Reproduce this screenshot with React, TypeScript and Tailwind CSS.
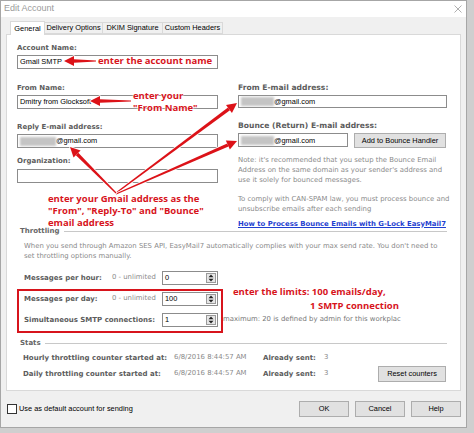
import React from 'react';

// Edit Account dialog (EasyMail7) with red tutorial annotations on top

const lbl = "h-[12px] shrink-0 font-['DejaVu_Sans',sans-serif] text-[7px] font-bold leading-[12px] text-[#5c5c5c] whitespace-nowrap";
const lblWide = "h-[12px] shrink-0 font-['DejaVu_Sans',sans-serif] text-[7.6px] font-bold leading-[12px] text-[#5c5c5c] whitespace-nowrap";
const ctl = "font-['Liberation_Sans',Arial,sans-serif] text-[7.4px] text-black whitespace-nowrap";
const note = "shrink-0 font-['DejaVu_Sans',sans-serif] text-[6.9px] leading-[9.7px] text-[#8a8a8a] whitespace-nowrap";
const redText = "absolute font-['Open_Sans',sans-serif] text-[9.5px] font-bold leading-[12px] text-[#d7141c] whitespace-nowrap [text-shadow:0_0_1px_#fff,0_0_2px_#fff,0_0_2px_#fff]";

const Blur = ({ w }: { w: number }) => (
  <div className="h-[9px] shrink-0 bg-[#c4c4c4] blur-[1px]" style={{ width: w }} />
);

const TextBox = ({ children, className = '' }: { children?: React.ReactNode; className?: string }) => (
  <div className={`flex h-[14px] items-center border border-[#8c8c8c] bg-white px-[2px] ${ctl} ${className}`}>
    {children}
  </div>
);

const Button = ({ label, className = '' }: { label: string; className?: string }) => (
  <div className={`flex shrink-0 items-center justify-center border border-[#adadad] bg-[#e1e1e1] ${ctl} ${className}`}>
    {label}
  </div>
);

const SpinBox = ({ value }: { value: string }) => (
  <div className={`flex h-[14px] w-[56px] shrink-0 items-center border border-[#8c8c8c] bg-white pl-[2px] ${ctl}`}>
    <span className="flex-1">{value}</span>
    <div className="mr-[1px] flex h-[10px] w-[10px] flex-col items-center justify-center border border-[#9a9a9a] bg-[#e6e6e6]">
      <svg width="6" height="8" viewBox="0 0 6 8">
        <path d="M3 0.5 L5.5 3.3 H0.5 Z" fill="#222" />
        <path d="M3 7.5 L5.5 4.7 H0.5 Z" fill="#222" />
      </svg>
    </div>
  </div>
);

const Legend = ({ title }: { title: string }) => (
  <div className="flex h-[10px] items-center pl-[3px]">
    <span className={`${lbl} h-[10px] leading-[10px] text-[#666]`}>{title}</span>
    <div className="ml-[4px] h-px flex-1 bg-[#c8c8c8]" />
  </div>
);

const ThrottleRow = ({
  label,
  value,
  limit = true,
  extra,
}: {
  label: string;
  value: string;
  limit?: boolean;
  extra?: string;
}) => (
  <div className="flex h-[14px] items-center pl-[7px]">
    <span className={`${lbl} w-[88px]`}>{label}</span>
    <span className={`${note} w-[50px] text-[#7a7a7a]`}>{limit ? '0 - unlimited' : ''}</span>
    <SpinBox value={value} />
    {extra && <span className={`${note} ml-[5px] text-[#777]`}>{extra}</span>}
  </div>
);

type Pt = { x1: number; y1: number; x2: number; y2: number };

const Arrow = ({ x1, y1, x2, y2 }: Pt) => {
  const dx = x2 - x1;
  const dy = y2 - y1;
  const len = Math.hypot(dx, dy);
  const ux = dx / len;
  const uy = dy / len;
  const nx = -uy;
  const ny = ux;
  const hl = 10;
  const hw = 5;
  const bx = x2 - ux * hl;
  const by = y2 - uy * hl;
  const t0 = 0.6;
  const t1 = 1.7;
  const shaft = `${x1 + nx * t0},${y1 + ny * t0} ${bx + nx * t1},${by + ny * t1} ${bx - nx * t1},${by - ny * t1} ${x1 - nx * t0},${y1 - ny * t0}`;
  const head = `${x2},${y2} ${bx + nx * hw},${by + ny * hw} ${bx - nx * hw},${by - ny * hw}`;
  return (
    <g>
      <polygon points={shaft} fill="#fff" stroke="#fff" strokeWidth="1.6" strokeLinejoin="round" />
      <polygon points={head} fill="#fff" stroke="#fff" strokeWidth="1.6" strokeLinejoin="round" />
      <polygon points={shaft} fill="#dc1218" />
      <polygon points={head} fill="#dc1218" />
    </g>
  );
};

const arrows: Pt[] = [
  { x1: 96, y1: 61, x2: 64, y2: 61 },
  { x1: 131, y1: 101, x2: 90, y2: 101 },
  { x1: 116, y1: 193, x2: 237, y2: 103 },
  { x1: 116, y1: 194, x2: 237, y2: 141 },
  { x1: 116, y1: 193, x2: 70, y2: 147 },
];

export default function App() {
  return (
    <div className="relative h-[433px] w-[474px] overflow-hidden bg-[#cfcfcf]">
      <div className="flex h-[428px] w-[467px] flex-col border border-[#a6a6a6] bg-[#f0f0f0]">
        {/* title bar */}
        <div className="flex h-[16px] shrink-0 items-center justify-between bg-white pl-[3px] pr-[4px]">
          <span className="font-['Liberation_Sans',Arial,sans-serif] text-[9px] text-[#9a9a9a]">Edit Account</span>
          <svg width="8" height="8" viewBox="0 0 8 8">
            <path d="M0.5 0.5 L7.5 7.5 M7.5 0.5 L0.5 7.5" stroke="#9a9a9a" strokeWidth="0.8" />
          </svg>
        </div>

        {/* tabs */}
        <div className="flex h-[17px] shrink-0 items-end pl-[9px]">
          <div className={`relative z-10 -mb-px flex h-[14px] w-[35px] items-center justify-center border border-b-0 border-[#d9d9d9] bg-white ${ctl}`}>
            General
          </div>
          <div className={`flex h-[12px] w-[58px] items-center justify-center border border-l-0 border-[#d9d9d9] bg-[#f0f0f0] ${ctl}`}>
            Delivery Options
          </div>
          <div className={`flex h-[12px] w-[60px] items-center justify-center border border-l-0 border-[#d9d9d9] bg-[#f0f0f0] ${ctl}`}>
            DKIM Signature
          </div>
          <div className={`flex h-[12px] w-[60px] items-center justify-center border border-l-0 border-[#d9d9d9] bg-[#f0f0f0] ${ctl}`}>
            Custom Headers
          </div>
        </div>

        {/* tab page */}
        <div className="mx-[5px] flex h-[357px] shrink-0 flex-col border border-[#d9d9d9] bg-white pl-[10px] pr-[13px] pt-[7px]">
          <div className={lbl}>Account Name:</div>
          <TextBox className="mt-[1px] w-[201px]">Gmail SMTP</TextBox>

          <div className="mt-[13px] flex h-[144px] gap-[20px]">
            <div className="flex w-[201px] shrink-0 flex-col">
              <div className={lbl}>From Name:</div>
              <TextBox className="mt-[1px]">Dmitry from Glocksoft</TextBox>
              <div className={`${lbl} mt-[12px]`}>Reply E-mail address:</div>
              <TextBox className="mt-[1px]">
                <Blur w={36} />
                <span>@gmail.com</span>
              </TextBox>
              <div className={`${lbl} mt-[7px]`}>Organization:</div>
              <TextBox className="mt-[2px]" />
            </div>

            <div className="flex w-[209px] shrink-0 flex-col">
              <div className={lblWide}>From E-mail address:</div>
              <TextBox className="mt-[1px]">
                <Blur w={33} />
                <span>@gmail.com</span>
              </TextBox>
              <div className={`${lblWide} mt-[12px]`}>Bounce (Return) E-mail address:</div>
              <div className="mt-[1px] flex items-start justify-between">
                <TextBox className="w-[110px]">
                  <Blur w={33} />
                  <span>@gmail.com</span>
                </TextBox>
                <Button label="Add to Bounce Handler" className="mr-[1px] h-[15px] w-[92px]" />
              </div>
              <div className={`${note} mt-[8px]`}>
                Note: it's recommended that you setup the Bounce Email
                <br />
                Address on the same domain as your sender's address and
                <br />
                use it solely for bounced messages.
              </div>
              <div className={`${note} mt-[10px]`}>
                To comply with CAN-SPAM law, you must process bounce and
                <br />
                unsubscribe emails after each sending
              </div>
              <div className="mt-[5px] font-['DejaVu_Sans',sans-serif] text-[6.9px] font-bold leading-[9.7px] whitespace-nowrap text-[#1f3fd0] underline">
                How to Process Bounce Emails with G-Lock EasyMail7
              </div>
            </div>
          </div>

          {/* throttling */}
          <Legend title="Throttling" />
          <div className={`${note} mt-[5px] pl-[7px] leading-[10px] text-[#7c7c7c]`}>
            When you send through Amazon SES API, EasyMail7 automatically complies with your max send rate. You don't need to
            <br />
            set throttling options manually.
          </div>
          <div className="mt-[10px] flex flex-col gap-[7px]">
            <ThrottleRow label="Messages per hour:" value="0" />
            <ThrottleRow label="Messages per day:" value="100" />
            <ThrottleRow
              label="Simultaneous SMTP connections:"
              value="1"
              limit={false}
              extra="maximum: 20 is defined by admin for this workplac"
            />
          </div>

          {/* stats */}
          <div className="mt-[11px]">
            <Legend title="Stats" />
          </div>
          <div className="mt-[4px] flex items-end justify-between">
            <div className="flex flex-col gap-[4px] pl-[6px]">
              {['Hourly throttling counter started at:', 'Daily throttling counter started at:'].map((t) => (
                <div key={t} className="flex h-[12px] items-center">
                  <span className={`${lbl} w-[151px]`}>{t}</span>
                  <span className={`${note} w-[89px] text-[#7a7a7a]`}>6/8/2016 8:44:57 AM</span>
                  <span className={`${lbl} w-[61px]`}>Already sent:</span>
                  <span className={`${note} text-[#7a7a7a]`}>3</span>
                </div>
              ))}
            </div>
            <Button label="Reset counters" className="-mb-[2px] mr-[1px] h-[16px] w-[68px]" />
          </div>
        </div>

        {/* bottom bar */}
        <div className="flex flex-1 items-center pl-[6px] pr-[5px]">
          <div className="h-[10px] w-[10px] border border-[#333] bg-white" />
          <span className={`${ctl} ml-[2px]`}>Use as default account for sending</span>
          <div className="ml-auto flex gap-[6px]">
            <Button label="OK" className="h-[16px] w-[50px]" />
            <Button label="Cancel" className="h-[16px] w-[50px]" />
            <Button label="Help" className="h-[16px] w-[50px]" />
          </div>
        </div>
      </div>

      {/* annotations */}
      <div className="pointer-events-none absolute left-[17px] top-[289px] h-[44px] w-[206px] border-2 border-[#d7141c]" />
      <svg className="pointer-events-none absolute left-0 top-0" width="474" height="433" viewBox="0 0 474 433">
        {arrows.map((a, i) => (
          <Arrow key={i} {...a} />
        ))}
      </svg>
      <div className={`${redText} left-[98px] top-[55px]`}>enter the account name</div>
      <div className={`${redText} left-[133px] top-[90px]`}>
        enter your
        <br />
        "From Name"
      </div>
      <div className={`${redText} left-[48px] top-[193px] leading-[12.5px]`}>
        enter your Gmail address as the
        <br />
        "From", "Reply-To" and "Bounce"
        <br />
        email address
      </div>
      <div className={`${redText} left-[233px] top-[286px]`}>enter the limits: 100 emails/day,</div>
      <div className={`${redText} left-[310px] top-[300px]`}>1 SMTP connection</div>
    </div>
  );
}
